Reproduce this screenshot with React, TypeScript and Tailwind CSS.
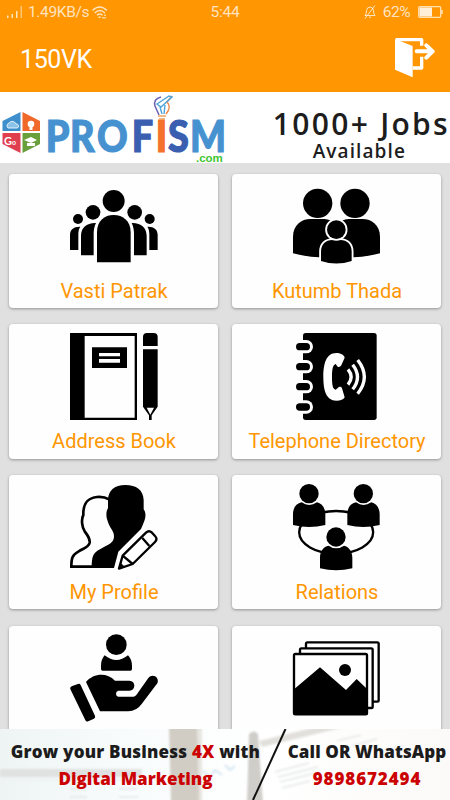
import type { ReactNode } from 'react';

const iconClass = 'w-[88px] h-[88px] shrink-0 overflow-visible';

const VastiIcon = () => (
  <svg viewBox="210 54 264 264" className={iconClass}>
    <circle cx="341" cy="108" r="33" />
    <path d="M291 292V202C291 168 313 150 341 150S392 168 392 202V292Z" />
    <circle cx="279" cy="142" r="22" />
    <path d="M243 271V213C243 188 260 173 288 174C283 184 281 195 281 206V271Z" />
    <circle cx="234" cy="162" r="15" />
    <path d="M210 255V210C210 193 222 184 241 185C236 192 235 200 235 210V255Z" />
    <circle cx="404" cy="142" r="22" />
    <path d="M440 271V213C440 188 423 173 395 174C400 184 402 195 402 206V271Z" />
    <circle cx="449" cy="162" r="15" />
    <path d="M473 255V210C473 193 461 184 442 185C447 192 448 200 448 210V255Z" />
  </svg>
);

const FamilyIcon = () => (
  <svg viewBox="204 54 264 264" className={iconClass}>
    <circle cx="278" cy="115" r="44" />
    <circle cx="390" cy="115" r="44" />
    <path d="M204 265V215C204 180 230 162 256 162H292C325 162 334 175 334 215V277Q265 281 204 265Z" />
    <path d="M465 265V215C465 180 439 162 413 162H377C344 162 334 175 334 215V277Q404 281 465 265Z" />
    <g stroke="white" strokeWidth="11" paintOrder="stroke">
      <path d="M288 288V260C288 238 302 225 322 225H346C366 225 380 238 380 260V288Q334 303 288 288Z" />
      <circle cx="334" cy="194" r="28" />
    </g>
  </svg>
);

const BookIcon = () => (
  <svg viewBox="210 39 264 264" className={iconClass}>
    <path fillRule="evenodd" d="M210 39H411V300H210ZM254 48V293H404V48Z" />
    <path fillRule="evenodd" d="M276 82H381V144H276ZM297 99V109H360V99ZM297 117V128H360V117Z" />
    <path d="M429 78V51Q429 39 441 39H461Q473 39 473 51V78Z" />
    <path fillRule="evenodd" d="M429 88H473V260L455 286V300H447V286L429 260ZM440 263L451 284L462 263Z" />
  </svg>
);

const PhoneBookIcon = () => (
  <svg viewBox="204 39 264 264" className={iconClass}>
    <rect x="234" y="39" width="221" height="261" rx="8" />
    {[80, 140, 200, 261].map((y) => (
      <g key={y}>
        <rect x="205" y={y - 20} width="59" height="40" rx="20" fill="white" />
        <rect x="213" y={y - 11} width="42" height="22" rx="11" />
      </g>
    ))}
    <path
      d="M334 99C303 99 295 132 295 171S303 242 334 242C347 242 356 239 359 232L351 205C348 199 342 200 339 203L332 209C323 207 321 195 321 171S324 134 332 132L338 140C342 143 346 140 349 136L359 113C357 104 346 99 334 99Z"
      fill="white"
    />
    <g fill="none" stroke="white" strokeWidth="10">
      <path d="M369 148Q388 171 369 194" />
      <path d="M383 134Q412 171 383 208" />
      <path d="M398 120Q438 171 398 221" />
    </g>
  </svg>
);

const ProfileIcon = () => (
  <svg viewBox="210 42 264 264" className={iconClass}>
    <path
      d="M327 88C315 81 303 80 291 81C262 84 249 100 250 135C243 148 246 172 254 184C264 197 270 205 269 218C266 232 252 234 236 244C217 254 214 265 214 290H285"
      fill="none"
      stroke="black"
      strokeWidth="8"
    />
    <path d="M376 45C343 45 324 62 324 92V115C318 122 318 140 322 150C327 172 342 182 342 198C342 220 326 222 300 238C280 248 275 258 275 294H342L355 245L423 177C427 169 430 160 434 150C438 138 437 126 431 118V90C430 60 409 45 376 45Z" />
    <g fill="white" stroke="black" strokeWidth="7" strokeLinejoin="round">
      <path d="M357 296L368 257L438 188Q447 180 456 188L465 198Q474 207 465 216L398 282Z" />
      <path d="M427 204L448 228M368 257L398 282" />
      <path d="M357 296L362 280L373 290Z" fill="black" strokeWidth="2" />
    </g>
  </svg>
);

const Person = ({ x, y }: { x: number; y: number }) => (
  <g transform={`translate(${x} ${y})`}>
    <circle r="29" />
    <path d="M-48 94V62C-48 42-38 29-22 26Q0 42 24 26C38 29 49 42 49 62V94Q0 106-48 94Z" />
  </g>
);

const RelationsIcon = () => (
  <svg viewBox="204 42 264 264" className={iconClass}>
    <ellipse cx="333.5" cy="187" rx="111" ry="64" fill="none" stroke="black" strokeWidth="7" />
    <circle cx="333" cy="201" r="36" fill="white" />
    <Person x={252} y={71} />
    <Person x={415} y={71} />
    <Person x={333} y={201} />
  </svg>
);

const CareIcon = () => (
  <svg viewBox="210 45 264 264" className={iconClass}>
    <circle cx="349" cy="74" r="31" />
    <path d="M303 147V138Q303 118 314 106Q349 134 384 106Q396 118 396 138V147Q396 152 391 152H308Q303 152 303 147Z" />
    <path d="M217 205L236 198L279 290L262 298Z" stroke="black" strokeWidth="13" strokeLinejoin="round" />
    <path d="M258 186C280 160 320 156 345 182H388C408 182 408 212 388 212H355Q348 213 348 221T355 230H400Q405 230 409 225L445 174C457 158 480 172 472 190L425 252Q409 274 385 274H300Z" />
  </svg>
);

const GalleryIcon = () => (
  <svg viewBox="204 45 264 264" className={iconClass}>
    <g fill="white" stroke="black" strokeWidth="7">
      <rect x="243" y="67" width="218" height="178" rx="4" />
      <rect x="225" y="85" width="218" height="179" rx="4" />
      <rect x="207" y="102" width="219" height="181" rx="4" />
    </g>
    <path d="M207 208L285 142L363 210L395 177L427 208V284H207Z" />
    <circle cx="360" cy="150" r="18" />
  </svg>
);

const items: { label: string; icon: ReactNode }[] = [
  { label: 'Vasti Patrak', icon: <VastiIcon /> },
  { label: 'Kutumb Thada', icon: <FamilyIcon /> },
  { label: 'Address Book', icon: <BookIcon /> },
  { label: 'Telephone Directory', icon: <PhoneBookIcon /> },
  { label: 'My Profile', icon: <ProfileIcon /> },
  { label: 'Relations', icon: <RelationsIcon /> },
  { label: '', icon: <CareIcon /> },
  { label: '', icon: <GalleryIcon /> },
];

const StatusBar = () => (
  <div className="h-6 grid grid-cols-3 items-center text-[15.5px] leading-6 text-white/75">
    <div className="flex items-center pl-[7px]">
      <svg viewBox="0 0 16 12" className="w-4 h-3 mr-[5px]" fill="currentColor">
        <path d="M0 9.5h1.5V12H0zM4.5 8H6v4H4.500zM9 5h1.500v7H9z" />
        <path d="M13.5 0H15v12h-1.500z" opacity=".6" />
      </svg>
      <span className="tracking-[-0.35px]">1.49KB/s</span>
      <svg viewBox="0 0 16 13" className="w-4 h-[13px] ml-[3px]" fill="none" stroke="currentColor" strokeWidth="1.3">
        <path d="M.5 4.5Q7.500-2.500 15 4.500M2.700 7Q7.700 2 13 7M5 9.300Q7.700 6.800 10.500 9.300" />
        <path d="M6.5 11.200h2.200M13 8.500v1.500M13 11v1.500M11 11v1.500" strokeWidth="1.5" />
      </svg>
    </div>
    <div className="text-center tracking-[-0.2px]">5:44</div>
    <div className="flex items-center justify-end pr-[7px]">
      <svg viewBox="0 0 12 14" className="w-3 h-3.5 mr-[7px]" fill="none" stroke="currentColor" strokeWidth="1">
        <path d="M1 10.500Q2.500 9 2.500 5.500Q3 2 6 2T9.500 5.500Q9.500 9 11 10.500ZM5 12.200h2M11 .5L1 13.500" />
      </svg>
      <span className="tracking-[-0.5px]">62%</span>
      <svg viewBox="0 0 25 12" className="w-[25px] h-3 ml-2">
        <rect x=".7" y=".7" width="22" height="10.6" rx="1" fill="none" stroke="white" strokeOpacity=".7" strokeWidth="1.3" />
        <rect x="1.5" y="1.5" width="12.5" height="9" fill="white" fillOpacity=".85" />
        <path d="M24 4v4" stroke="white" strokeOpacity=".7" strokeWidth="1.5" />
      </svg>
    </div>
  </div>
);

const Logo = () => (
  <svg viewBox="0 0 230 71" className="w-[230px] h-[71px] shrink-0">
    {/* Hexagon badge */}
    <path d="M2.5 29L20.500 20V39H2.500Z" fill="#3f8fcd" />
    <path d="M22.5 20L40 29V39H22.500Z" fill="#f0682a" />
    <path d="M2.5 41H20.500V61L2.500 52Z" fill="#e0404e" />
    <path d="M22.5 41H40V52L22.500 61Z" fill="#6aa03c" />
    <path d="M8 36a3 3 0 0 1 1-5a4 4 0 0 1 7 1a2 2 0 0 1 1 4Z" fill="#8ac2e8" stroke="white" strokeWidth=".8" />
    <circle cx="31" cy="32" r="3.3" fill="white" />
    <path d="M29.5 34h3v4h-3zM24 48l7-3 6 3-6 3zM27 51v3h8v-3z" fill="white" />
    <text x="4" y="53" fontSize="11" fontWeight="700" fill="white" fontFamily="Lato, sans-serif">G<tspan fontSize="7">o</tspan></text>
    {/* Wordmark, narrowed horizontally */}
    <text transform="translate(0 59.500) scale(.87 1)" fontSize="43.5" fontWeight="900" fontFamily="Lato, sans-serif" strokeWidth="1.2">
      <tspan x="52.500 80.500 111.500" fill="#4692d0" stroke="#4692d0">PRO</tspan>
      <tspan x="151.500" fill="#3a5fb0" stroke="#3a5fb0">F</tspan>
      <tspan x="179" fill="#f47229" stroke="#f47229">I</tspan>
      <tspan x="193" fill="#3a5fb0" stroke="#3a5fb0">S</tspan>
      <tspan x="218.500" fill="#4692d0" stroke="#4692d0">M</tspan>
    </text>
    {/* Pencil bulb over the I */}
    <path d="M159 23L155 14Q153 7 161 5" fill="none" stroke="#6a5fb5" strokeWidth="1.5" />
    <path d="M166 22Q172 15 167 10L172 4" fill="none" stroke="#f08a4b" strokeWidth="1.5" />
    <path d="M157 12L169 4L172 5L161 15ZM160 15l2 7M165 13l-1 9" fill="none" stroke="#4fa5d8" strokeWidth="1.4" />
    <path d="M158 24h8M159 27h6" stroke="#f2a25e" strokeWidth="1.5" />
    <text x="196" y="69.500" fontSize="11.5" fontWeight="700" fill="#3fc532" fontFamily="Liberation Sans, sans-serif">.com</text>
  </svg>
);

const BottomBackdrop = () => (
  <svg viewBox="0 0 450 71" className="absolute inset-0 w-full h-full">
    <defs>
      <filter id="soft"><feGaussianBlur stdDeviation="1.2" /></filter>
      <linearGradient id="paper" x1="0" x2="1">
        <stop offset="0" stopColor="#eef4f4" />
        <stop offset=".3" stopColor="#f9fcfc" />
        <stop offset=".6" stopColor="#ffffff" />
        <stop offset="1" stopColor="#fbfaf8" />
      </linearGradient>
    </defs>
    <rect width="450" height="71" fill="url(#paper)" />
    <g filter="url(#soft)">
      <path d="M0 40H142V48H0Z" fill="#e0e1e1" />
      <path d="M0 50H142V52H0Z" fill="#edf1f2" />
      <path d="M169 -3H197L202 75H171Z" fill="#d1cdc5" />
      <path d="M197 -3H202V75H199Z" fill="#e7e5e0" />
      <path d="M249 5Q254 0 258 5L263 75H247Z" fill="#cfcec9" />
      <path d="M259 12L316 -2H345L262 18Z" fill="#e1e0db" />
      <path d="M203 42l7 6 5-7 7 5M225 36l5 5 5-4" fill="none" stroke="#d3e5f1" strokeWidth="1.8" />
      <path d="M275 43l34-9M278 48l40-10M280 53l40-10M282 59l28-7M337 12l24-6M352 17l25-7M385 22l18-5M70 60h16M119 60h18M70 68h17M119 68h20" stroke="#e4e6e8" strokeWidth="1.5" />
    </g>
    <path d="M285.5 0L253 71" stroke="#111" strokeWidth="2" />
  </svg>
);

export default function App() {
  return (
    <div className="w-[450px] h-[800px] overflow-hidden flex flex-col bg-[#e0e0e0] font-['Roboto',sans-serif]">
      {/* Header */}
      <header className="h-[92px] shrink-0 bg-[#ff9602]">
        <StatusBar />
        <div className="h-[68px] flex items-center justify-between pl-5 pr-[15px]">
          <h1 className="text-[25px] leading-[30px] tracking-[-0.4px] text-white pt-[3px]">150VK</h1>
          <svg viewBox="510 113 120 120" className="w-10 h-10 -mt-px" fill="white">
            <path d="M510 116L563 137V231L510 208Z" />
            <path d="M512 118H590V136M590 169V203H563" fill="none" stroke="white" strokeWidth="10" strokeLinejoin="round" />
            <path d="M575 153H620M604 135L623 153L604 172" fill="none" stroke="white" strokeWidth="12" strokeLinecap="round" strokeLinejoin="round" />
          </svg>
        </div>
      </header>

      {/* Top banner */}
      <section className="h-[71px] shrink-0 bg-white flex">
        <Logo />
        <div className="grow flex flex-col items-end text-[#1d1d1d] font-['Open_Sans',sans-serif] whitespace-nowrap">
          <p className="text-[30px] leading-[34px] mt-[15px] font-semibold tracking-[2.3px]">1000+ Jobs</p>
          <p className="text-[19px] leading-[20px] mr-[44px] font-semibold tracking-[1.1px]">Available</p>
        </div>
      </section>

      {/* Menu grid */}
      <main className="h-[566px] shrink-0 overflow-hidden px-[9px] pt-[10.85px]">
        <div className="grid grid-cols-2 gap-x-3.5 gap-y-[16.2px] auto-rows-[134.4px]">
          {items.map((item, i) => (
            <div key={i} className="bg-[#fefefe] rounded-[4px] shadow-[0_1px_3px_rgba(0,0,0,0.35)] flex flex-col items-center pt-[9px] pl-px">
              {item.icon}
              <span className="text-[20px] leading-[24px] mt-2 text-[#ff9602]">{item.label}</span>
            </div>
          ))}
        </div>
      </main>

      {/* Bottom banner */}
      <footer className="h-[71px] shrink-0 relative overflow-hidden">
        <BottomBackdrop />
        <div className="relative flex font-['Open_Sans',sans-serif] font-extrabold text-[17px] leading-[27px] text-[#1c1c1c] text-center whitespace-nowrap pt-[9px]">
          <div className="w-[271px]">
            <p className="tracking-[0.2px]">Grow your Business <span className="text-[#cc0202]">4X</span> with</p>
            <p className="text-[#cc0202]">Digital Marketing</p>
          </div>
          <div className="w-[192px] -mr-[13px]">
            <p className="tracking-[0.1px]">Call OR WhatsApp</p>
            <p className="text-[#cc0202] tracking-[0.9px]">9898672494</p>
          </div>
        </div>
      </footer>
    </div>
  );
}
